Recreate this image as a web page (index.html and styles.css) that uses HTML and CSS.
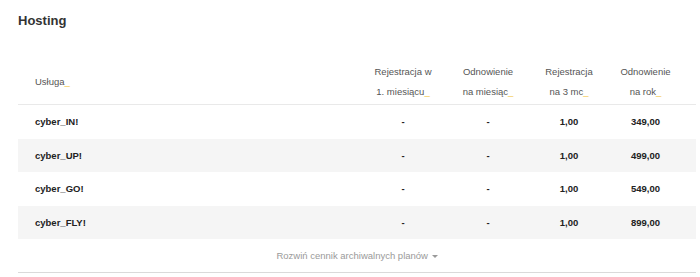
FILE: index.html
```html
<!DOCTYPE html>
<html lang="pl">
<head>
    <meta charset="UTF-8">
    <meta name="viewport" content="width=device-width, initial-scale=1.0">
    <title>Hosting - cennik</title>
    <link rel="stylesheet" href="styles.css">
</head>
<body>
    <div class="container">
        <h2 class="section-title">Hosting</h2>
        <table class="price-table">
            <colgroup>
                <col class="col-name">
                <col class="col-price">
                <col class="col-price2">
                <col class="col-price3">
                <col class="col-last">
            </colgroup>
            <thead>
                <tr>
                    <th class="name">Usługa<span class="mark">_</span></th>
                    <th>Rejestracja w<br>1. miesiącu<span class="mark">_</span></th>
                    <th>Odnowienie<br>na miesiąc<span class="mark">_</span></th>
                    <th>Rejestracja<br>na 3 mc<span class="mark">_</span></th>
                    <th class="last">Odnowienie<br>na rok<span class="mark">_</span></th>
                </tr>
            </thead>
            <tbody>
                <tr>
                    <td class="name">cyber_IN!</td>
                    <td>-</td>
                    <td>-</td>
                    <td>1,00</td>
                    <td class="last">349,00</td>
                </tr>
                <tr class="alt">
                    <td class="name">cyber_UP!</td>
                    <td>-</td>
                    <td>-</td>
                    <td>1,00</td>
                    <td class="last">499,00</td>
                </tr>
                <tr>
                    <td class="name">cyber_GO!</td>
                    <td>-</td>
                    <td>-</td>
                    <td>1,00</td>
                    <td class="last">549,00</td>
                </tr>
                <tr class="alt">
                    <td class="name">cyber_FLY!</td>
                    <td>-</td>
                    <td>-</td>
                    <td>1,00</td>
                    <td class="last">899,00</td>
                </tr>
            </tbody>
            <tfoot>
                <tr>
                    <td colspan="5" class="more">
                        <a href="#" class="more-link">Rozwiń cennik archiwalnych planów <span class="caret"></span></a>
                    </td>
                </tr>
            </tfoot>
        </table>
    </div>
</body>
</html>
```

FILE: styles.css
```css
* {
    margin: 0;
    padding: 0;
    box-sizing: border-box;
    font-family: 'Liberation Sans', Arial, sans-serif;
}

body {
    background-color: #fff;
    color: #333;
}

.container {
    padding: 0 4px 0 18px;
}

.section-title {
    font-size: 13px;
    font-weight: bold;
    line-height: 20px;
    color: #333;
    margin-top: 11px;
}

.price-table {
    width: 100%;
    margin-top: 19px;
    border-collapse: collapse;
    table-layout: fixed;
    font-size: 9.5px;
}

.col-name { width: 342px; }
.col-price { width: 86px; }
.col-price2 { width: 84px; }
.col-price3 { width: 78px; }
.col-last { width: 88px; }

.price-table th {
    font-weight: normal;
    color: #555;
    line-height: 20px;
    padding: 12px 0 2px;
    text-align: center;
    vertical-align: middle;
    border-bottom: 1px solid #e9e9e9;
}

.price-table td {
    font-weight: bold;
    color: #222;
    line-height: 17.5px;
    padding: 8px 0;
    text-align: center;
}

.price-table .name {
    text-align: left;
    padding-left: 17px;
}

.price-table .last {
    padding-right: 13px;
}

.mark {
    color: #f3c84a;
}

.price-table tr.alt td {
    background: #f5f5f5;
}

.price-table td.more {
    font-weight: normal;
    padding: 8px 0;
    line-height: 17px;
    border-bottom: 1px solid #dadada;
}

.more-link {
    color: #9a9a9a;
    text-decoration: none;
}

.caret {
    display: inline-block;
    width: 0;
    height: 0;
    border-left: 3px solid transparent;
    border-right: 3px solid transparent;
    border-top: 3px solid #9a9a9a;
    vertical-align: middle;
    margin-left: 1px;
}
```
